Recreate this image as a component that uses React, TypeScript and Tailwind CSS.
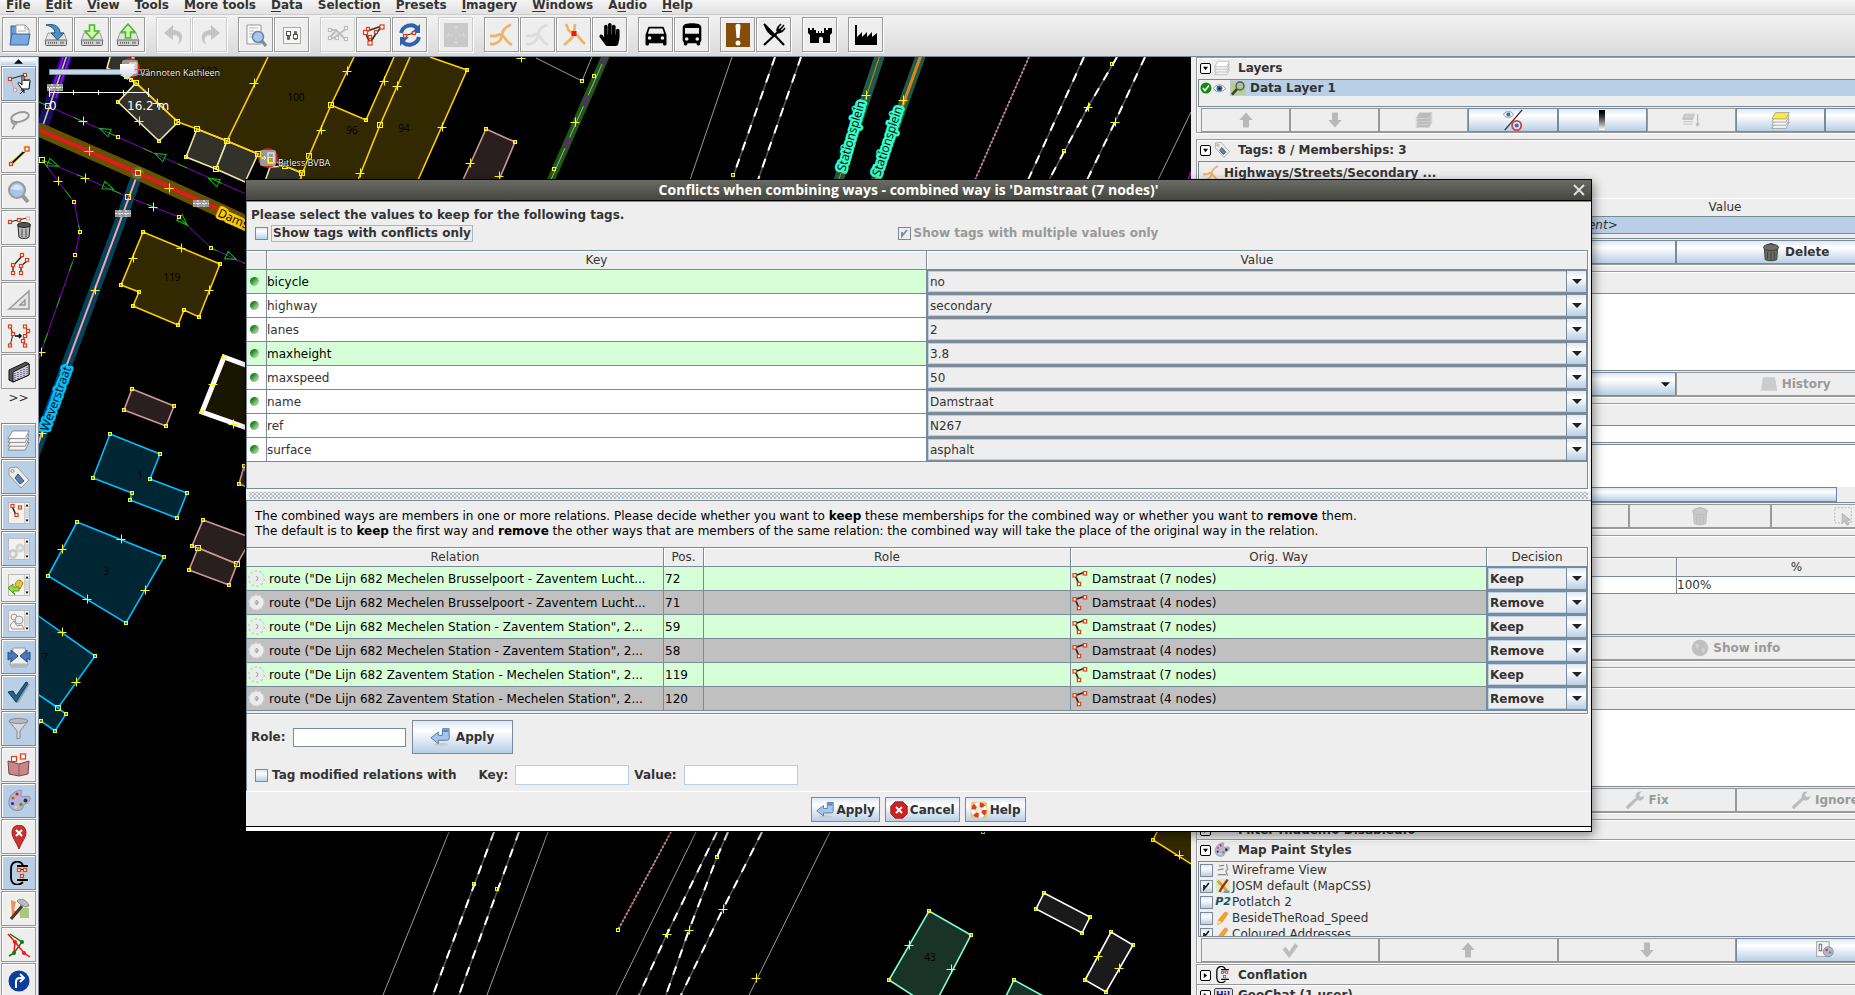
import type { ReactNode } from "react";
import { MdDirectionsBus, MdDirectionsCar } from "react-icons/md";
import { FaHandPaper } from "react-icons/fa";

/* ---------- shared class strings ---------- */

const SHINE = "bg-linear-to-b from-[#dde8f3] via-white via-30% to-[#b8cfe5]";

/* ---------- icon primitives ---------- */

function Svg({ children, size = 24, box = "0 0 24 24" }: { children: ReactNode; size?: number; box?: string }) {
  return (
    <svg width={size} height={size} viewBox={box} fill="none" className="shrink-0" aria-hidden="true">
      {children}
    </svg>
  );
}

function Dot({ x, y, c = "#e03c14", s = 3 }: { x: number; y: number; c?: string; s?: number }) {
  return <rect x={x - s / 2} y={y - s / 2} width={s} height={s} fill="#fff" stroke={c} strokeWidth="1.2" />;
}

function Drive() {
  return (
    <>
      <path d="M4 10h16l3 8H1z" fill="#e4e4e2" stroke="#888" strokeWidth=".8" />
      <rect x="1.500" y="17" width="21" height="5.500" rx="1" fill="#d0d0ce" stroke="#666" />
      <path d="M4 19.700h9" stroke="#666" strokeWidth="2" strokeDasharray="1 1" />
      <rect x="16" y="18.700" width="4" height="2" fill="#888" />
    </>
  );
}

function Road({ c, spot = false, size = 24 }: { c: string; spot?: boolean; size?: number }) {
  return (
    <Svg size={size}>
      {spot ? (
        <>
          <path d="M4 1l3 7 5 2 1-9M12 10c-1 5-5 8-10 12M12 10c5 2 6 7 11 11" stroke={c} strokeWidth="2.800" />
          <rect x="9.500" y="8" width="5" height="5" fill="#f11" />
        </>
      ) : (
        <path d="M21 1.500C14 5 12 8 12 13c-1 4-4 7-8 8H0M0 13h6c3-2 6-2 8 1 2 3 4 6 8 8" stroke={c} strokeWidth="2.800" />
      )}
    </Svg>
  );
}

function ArrowIcon({ dir }: { dir: "up" | "down" }) {
  return (
    <Svg size={18}>
      <path d={dir === "up" ? "M12 2l9 10h-5v10H8V12H3z" : "M12 22l9-10h-5V2H8v10H3z"} fill="#b9b9b9" />
    </Svg>
  );
}

function LayersIcon({ c = "#f4f4f4", size = 22, top = "#fff", line = "#888" }: { c?: string; size?: number; top?: string; line?: string }) {
  return (
    <Svg size={size}>
      {[14, 10, 6, 2].map((y, i) => (
        <path key={y} d={`M6 ${y}h17l-4 8H1z`} fill={i === 3 ? top : c} stroke={line} />
      ))}
    </Svg>
  );
}

function TagIcon({ size = 24 }: { size?: number }) {
  return (
    <Svg size={size}>
      <path d="M2 3l8-1 12 13-8 8L2 10z" fill="#eeeee6" stroke="#999" />
      <circle cx="5.500" cy="6" r="1.500" fill="#fff" stroke="#888" />
      <path d="M11 9l6 7-4 3-5-6z" fill="#5b7fb5" stroke="#32548c" />
    </Svg>
  );
}

function PaletteIcon({ size = 24 }: { size?: number }) {
  return (
    <Svg size={size}>
      <path d="M14 1C5 2 1 9 2 15c1 7 9 8 13 5 2-2 0-4 3-5 4-1 6-5 5-7-3-2-7 1-9-1-1-2 2-4 0-6z" fill="#b4b4d8" stroke="#8080a0" strokeWidth=".8" />
      <circle cx="10" cy="5" r="1.600" fill="#d02020" />
      <circle cx="6" cy="9" r="1.600" fill="#d06010" />
      <circle cx="5.500" cy="14.500" r="1.600" fill="#2030c0" />
      <circle cx="9" cy="18" r="1.600" fill="#f0e040" />
      <circle cx="14" cy="15.500" r="1.700" fill="#50a020" />
      <circle cx="18.500" cy="11.500" r="2" fill="#333" />
    </Svg>
  );
}

function ConflateIcon({ size = 24 }: { size?: number }) {
  return (
    <Svg size={size}>
      <path d="M16 4C13-1 4-1 4 8v8c0 9 8 9 12 5M10 5h11M10 19h11" stroke="#000" strokeWidth="1.800" />
      <path d="M12 8.500h7" stroke="#000" />
      <Dot x={12} y={9} /> <Dot x={18} y={9} /> <Dot x={15} y={15} />
    </Svg>
  );
}

function Wrench() {
  return (
    <Svg size={20}>
      <path d="M2 19L13 9c-1-4 2-8 7-7l-3 3 1 3 4 0 1-2c1 5-4 8-8 6L5 22c-2 2-5-1-3-3z" fill="#bdbdbd" />
    </Svg>
  );
}

function Bin({ c = "#6d6d68", line = "#33332f" }: { c?: string; line?: string }) {
  return (
    <Svg size={20}>
      <path d="M4 8h16l-1 13c-2 2-12 2-14 0z" fill={c} stroke={line} />
      <ellipse cx="12" cy="6.500" rx="9" ry="4" fill={c} stroke={line} />
      <path d="M9 4c0-3 6-3 6 0M8 12v9M12 12.500v9M16 12v9" stroke={line} />
    </Svg>
  );
}

function ReturnArrow({ size = 20 }: { size?: number }) {
  return (
    <Svg size={size}>
      <ellipse cx="13" cy="21" rx="9" ry="2" fill="#ccc" />
      <path d="M1 13l9-7v4h5V2h8v11c0 2-1 3-3 3H10v4z" fill="#a9c4e6" stroke="#3d6aa8" />
      <path d="M16 3h6v3h-6z" fill="#5b86c0" />
    </Svg>
  );
}

function WindowIcon({ children }: { children: ReactNode }) {
  return (
    <Svg>
      <rect x="1.500" y="1.500" width="21" height="21" fill="#f2f2f0" stroke="#bbb" />
      {children}
      <path d="M17.500 2v20" stroke="#ccc" />
      <rect x="18" y="7" width="4" height="10" fill="#d8d8d8" />
      <path d="M18.500 5.500L20 3l1.500 2.500zM18.500 18.500L20 21l1.500-2.500z" fill="#000" />
    </Svg>
  );
}

function WayIcon() {
  return (
    <Svg size={16}>
      <path d="M4 7l15-5M5 7l6 14" stroke="#222" strokeWidth="2.500" />
      <rect x="1.500" y="4" width="5" height="5" fill="#fff" stroke="#e03c14" strokeWidth="1.800" />
      <rect x="17" y="1" width="5" height="5" fill="#fff" stroke="#e03c14" strokeWidth="1.800" />
      <rect x="8" y="17" width="5" height="5" fill="#fff" stroke="#e03c14" strokeWidth="1.800" />
    </Svg>
  );
}

function Gear() {
  return (
    <Svg size={17}>
      <circle cx="12" cy="12" r="10" stroke="#cfcfcf" strokeWidth="4" strokeDasharray="3.500 2.780" />
      <circle cx="12" cy="12" r="6.500" stroke="#ececec" strokeWidth="7" />
      <path d="M11 9a3 3 0 110 6" stroke="#999" strokeWidth="1.300" />
    </Svg>
  );
}

function Eye({ size = 13 }: { size?: number }) {
  return (
    <Svg size={size}>
      <path d="M1 12C6 3 18 3 23 12 18 20 6 20 1 12z" fill="#fff" stroke="#888" strokeWidth="1.500" />
      <circle cx="12" cy="12" r="5.500" fill="#3f6db0" />
      <circle cx="12" cy="12" r="2.500" fill="#0a1e44" />
    </Svg>
  );
}

function Pencil() {
  return (
    <Svg size={14}>
      <path d="M4 16L15 2l5 3L10 20l-7 3z" fill="#f7a51c" stroke="#d8820c" />
      <path d="M15 2l2-1 4 3-1 1z" fill="#e88" />
      <path d="M4 16l6 4-7 3z" fill="#f4ddb0" />
    </Svg>
  );
}

/* ---------- top toolbar ---------- */

type Tool = { name: string; icon: ReactNode; off?: boolean };

const toolGroups: Tool[][] = [
  [
    {
      name: "Open",
      icon: (
        <Svg>
          <path d="M3 3h7l2 2v14H3z" fill="#6b9bd0" stroke="#2f5f9c" />
          <path d="M8 2h9l4 4v10H8z" fill="#fafafa" stroke="#999" />
          <path d="M17 2v4h4M10 8h8" stroke="#aaa" />
          <path d="M4 11h18l-2 11H2z" fill="#7ba7dc" stroke="#3465a4" />
        </Svg>
      ),
    },
    {
      name: "Save",
      icon: (
        <Svg>
          <Drive />
          <path d="M2 2c9-2 14 2 14 8h4l-6.500 7L7 10h4c0-4-4-7-9-8z" fill="#4a8fc0" stroke="#1f5a8a" />
        </Svg>
      ),
    },
    {
      name: "Download",
      icon: (
        <Svg>
          <Drive />
          <path d="M9.500 2h5v6H19l-7 8-7-8h4.500z" fill="#d4f8b4" stroke="#4ab520" strokeWidth="1.500" />
        </Svg>
      ),
    },
    {
      name: "Upload",
      icon: (
        <Svg>
          <Drive />
          <path d="M9.500 15h5V9H19l-7-8-7 8h4.500z" fill="#d4f8b4" stroke="#4ab520" strokeWidth="1.500" />
        </Svg>
      ),
    },
  ],
  [
    { name: "Undo", off: true, icon: <Svg><path d="M11 2L2 10l9 7v-5c6 0 8 3 5 10 7-6 5-15-5-15z" fill="#c4c4c4" /></Svg> },
    { name: "Redo", off: true, icon: <Svg><path d="M13 2l9 8-9 7v-5c-6 0-8 3-5 10-7-6-5-15 5-15z" fill="#c4c4c4" /></Svg> },
  ],
  [
    {
      name: "Search",
      icon: (
        <Svg>
          <path d="M3 2h14v19H3z" fill="#fafafa" stroke="#999" />
          <path d="M5 5h9M5 8h5M5 11h4M5 14h3" stroke="#bbb" />
          <path d="M18 18l4 5" stroke="#888" strokeWidth="3" />
          <circle cx="14" cy="14" r="5.500" fill="#a9c7ec" stroke="#6787b0" strokeWidth="1.500" />
        </Svg>
      ),
    },
    {
      name: "Preferences",
      icon: (
        <Svg>
          <rect x="3.500" y="4.500" width="17" height="16" fill="#f6f6f2" stroke="#aaa" />
          <rect x="7" y="8" width="3" height="9" rx="1" fill="#666" />
          <rect x="14" y="8" width="3" height="9" rx="1" fill="#666" />
          <rect x="6.500" y="8.500" width="4" height="4" fill="#fff" stroke="#555" />
          <rect x="13.500" y="11.500" width="4" height="4" fill="#fff" stroke="#555" />
        </Svg>
      ),
    },
  ],
  [
    {
      name: "Split way",
      off: true,
      icon: (
        <Svg>
          <path d="M3 7h7l9 9M3 15h5L21 5M3 15l8-8" stroke="#bdbdbd" strokeWidth="2" />
          <Dot x={4} y={7} c="#bdbdbd" /> <Dot x={4} y={15} c="#bdbdbd" /> <Dot x={11} y={15} c="#bdbdbd" /> <Dot x={20} y={5} c="#bdbdbd" /> <Dot x={20} y={16} c="#bdbdbd" />
        </Svg>
      ),
    },
    {
      name: "Combine way",
      icon: (
        <Svg>
          <path d="M3 9l8-3 9-3M3 9l5 11M20 3l-7 9-5 8" stroke="#333" strokeWidth="1.800" />
          <Dot x={3.500} y={9.500} s={4} /> <Dot x={6} y={6} /> <Dot x={20} y={4} s={4} /> <Dot x={14} y={9} /> <Dot x={8} y={14} /> <Dot x={8} y={20} s={4} />
        </Svg>
      ),
    },
    {
      name: "Update data",
      icon: (
        <Svg>
          <path d="M3 10C5 2 15 0 19 5" stroke="#2f62ad" strokeWidth="4" />
          <path d="M22 1v9h-9z" fill="#2f62ad" />
          <path d="M21 14c-2 8-12 10-16 5" stroke="#2f62ad" strokeWidth="4" />
          <path d="M2 23v-9h9z" fill="#2f62ad" />
          <path d="M6 13l10-3" stroke="#222" /> <Dot x={7} y={13} /> <Dot x={16} y={10} />
        </Svg>
      ),
    },
  ],
  [
    {
      name: "Fullscreen",
      off: true,
      icon: (
        <Svg>
          <rect width="24" height="24" fill="#c9c9c9" />
          <path d="M12 9V3m-2 2l2-2 2 2M12 15v6m-2-2l2 2 2-2M9 12H3m2-2l-2 2 2 2M15 12h6m-2-2l2 2-2 2" stroke="#dcdcdc" strokeDasharray="2 1" />
        </Svg>
      ),
    },
  ],
  [
    { name: "Roads", icon: <Road c="#f1b36a" /> },
    { name: "Paths", icon: <Road c="#dcdcdc" /> },
    { name: "Junction", icon: <Road c="#f1b36a" spot /> },
    { name: "Barrier", icon: <FaHandPaper size={23} color="#000" /> },
  ],
  [
    { name: "Car", icon: <MdDirectionsCar size={28} color="#000" /> },
    { name: "Bus", icon: <MdDirectionsBus size={28} color="#000" /> },
  ],
  [
    {
      name: "Attraction",
      icon: (
        <Svg>
          <rect width="24" height="24" fill="#854c0a" />
          <path d="M9.500 3c0-3 5-3 5 0l-1 12h-3z" fill="#fff" />
          <circle cx="12" cy="20" r="2.500" fill="#fff" />
        </Svg>
      ),
    },
    {
      name: "Restaurant",
      icon: (
        <Svg>
          <path d="M2 1l20 21" stroke="#000" strokeWidth="2.200" />
          <path d="M2 1l13 12-3 1C7 12 3 7 2 1z" fill="#000" />
          <path d="M2 22L17 8" stroke="#000" strokeWidth="2.200" />
          <path d="M15 8c0-3 1-4 4-7M17 8l5-6M16 9c3 1 5-1 7-4" stroke="#000" strokeWidth="1.500" />
          <path d="M15 10c-1-2 0-4 2-5l3 3c-1 2-3 3-5 2z" fill="#000" />
        </Svg>
      ),
    },
  ],
  [
    {
      name: "Castle",
      icon: (
        <Svg>
          <path d="M0 5h2v2h2V5h2v2h2V5h0v5h2V8h1v2h2V8h1v2h2V5h2v2h2V5h2v2h0V5h2v5l-2 2v8h-7v-4c0-3-4-3-4 0v4H2v-8l-2-2z" fill="#000" />
        </Svg>
      ),
    },
  ],
  [
    {
      name: "Factory",
      icon: (
        <Svg>
          <path d="M1 2h2v12l5-5v5l5-5v5l5-5v5l5-4v12H1z" fill="#000" />
        </Svg>
      ),
    },
  ],
];

/* ---------- left toolbar ---------- */

const modes: Tool[] = [
  {
    name: "Select",
    icon: (
      <Svg>
        <path d="M3 7l14-4" stroke="#222" /> <path d="M3 7l5 11" stroke="#d99" />
        <Dot x={3} y={7} /> <Dot x={18} y={3} /> <Dot x={8} y={18} c="#e0a090" />
        <path d="M13 11c-2-1-3 0-1 2l3 4h7l1-8c0-2-2-2-2 0 0-2-2-2-2 0 0-2-2-2-2 0V5c0-2-2-2-2 0v8z" fill="#fff" stroke="#000" />
        <path d="M13 22l4-4m-3 0h3v3" stroke="#000" />
      </Svg>
    ),
  },
  {
    name: "Lasso",
    icon: (
      <Svg>
        <ellipse cx="13" cy="9" rx="9" ry="4.500" stroke="#999" strokeWidth="2" transform="rotate(-15 13 9)" />
        <path d="M5 12c-2 3 3 5 5 3M8 14c-1 3 0 5-3 7" stroke="#999" strokeWidth="1.800" />
      </Svg>
    ),
  },
  {
    name: "Draw",
    icon: (
      <Svg>
        <path d="M4 20L20 5" stroke="#e8e060" strokeWidth="3.500" />
        <path d="M4 20L20 5" stroke="#111" strokeWidth="1.800" />
        <rect x="16" y="1" width="7" height="7" fill="#f4ee80" /> <Dot x={4} y={20} /> <Dot x={20} y={5} s={4} />
      </Svg>
    ),
  },
  {
    name: "Zoom",
    icon: (
      <Svg>
        <path d="M15 15l6 7" stroke="#999" strokeWidth="4" />
        <circle cx="10" cy="10" r="8" fill="#a9c4e6" stroke="#999" strokeWidth="2" />
        <path d="M4 9c2-6 10-6 12 0-4 2-8 1-12 0z" fill="#d5e3f5" />
      </Svg>
    ),
  },
  {
    name: "Delete",
    icon: (
      <Svg>
        <path d="M2 6l18-4" stroke="#222" /> <Dot x={3} y={6} /> <Dot x={12} y={4} /> <Dot x={21} y={2.5} c="#e8b0a0" />
        <path d="M11 10h12l-1 11c-2 2-8 2-10 0z" fill="#bbb" stroke="#222" />
        <ellipse cx="17" cy="9" rx="6.500" ry="2.500" fill="#555" stroke="#222" />
        <path d="M15 13v8M19 13v8" stroke="#444" />
      </Svg>
    ),
  },
  {
    name: "Parallel",
    icon: (
      <Svg>
        <path d="M6 21v-7l9-10M14 21v-7l6-5" stroke="#222" strokeWidth="1.300" />
        <Dot x={6} y={21} /> <Dot x={6} y={13} /> <Dot x={15} y={3} /> <Dot x={14} y={21} /> <Dot x={14} y={14} /> <Dot x={20} y={8} />
      </Svg>
    ),
  },
  { name: "Angle", icon: <Svg><path d="M2 21L22 3v18zM13 17l5-5v5z" fill="#e6e6e6" stroke="#999" strokeWidth="1.500" /></Svg> },
  {
    name: "Improve way",
    icon: (
      <Svg>
        <path d="M3 2l3 8-3 12M18 2l3 5-5 9 2 6" stroke="#222" />
        <path d="M8 12h6m-2-2l2 2-2 2" stroke="#000" strokeWidth="1.500" />
        <Dot x={3} y={2.5} /> <Dot x={6} y={10} /> <Dot x={3} y={21.5} /> <Dot x={18} y={2.5} /> <Dot x={21} y={7} /> <Dot x={18} y={12} /> <Dot x={16} y={17} /> <Dot x={18} y={21.5} />
      </Svg>
    ),
  },
  {
    name: "Extrude",
    icon: (
      <Svg>
        <path d="M2 10L19 2l3 2v11L6 22l-4-2z" fill="#555" stroke="#111" />
        <path d="M6 12l16-8v11L6 22z" fill="#ccd" stroke="#111" />
        <path d="M8 13v7M11 12v7M14 10v7M17 9v7M20 7v7" stroke="#223" strokeDasharray="1 1" />
      </Svg>
    ),
  },
];

const panels: (Tool & { on?: boolean })[] = [
  { name: "Layers", on: true, icon: <LayersIcon size={23} /> },
  { name: "Tags", on: true, icon: <TagIcon /> },
  { name: "Selection", on: true, icon: <WindowIcon><path d="M5 5l4 9" stroke="#222" strokeWidth="1.500" /><Dot x={5.5} y={5} /><Dot x={13} y={6.5} /><Dot x={9.5} y={14} /></WindowIcon> },
  { name: "Relations", on: true, icon: <WindowIcon><circle cx="6" cy="17" r="3.500" stroke="#ccc" strokeWidth="3" /><circle cx="13" cy="11" r="3" stroke="#d4d4d4" strokeWidth="3" /></WindowIcon> },
  { name: "Commands", icon: <WindowIcon><path d="M8 12c1-6 6-6 8-2l-3 6c-2-1-4-2-5-4z" fill="#e8c040" stroke="#a88820" /><path d="M1 15l5-4v3h6v4H6l2 4z" fill="#9dd84a" stroke="#5a9a20" /></WindowIcon> },
  { name: "Authors", on: true, icon: <WindowIcon><circle cx="7" cy="8" r="3" stroke="#999" /><circle cx="12" cy="11" r="4" fill="#eee" stroke="#999" /><path d="M3 16l4-4 3 5 5-1 2 4H5z" stroke="#999" /></WindowIcon> },
  {
    name: "Merge",
    on: true,
    icon: (
      <Svg>
        <path d="M6 3h12l3 17H3z" fill="#f0f0ee" stroke="#999" />
        <path d="M1 7l3 2V5l7 6-7 6v-4l-3 2zM23 7l-3 2V5l-7 6 7 6v-4l3 2z" fill="#4a7ab8" stroke="#234f8c" />
        <path d="M5 19h14M4 22h16" stroke="#aaa" />
      </Svg>
    ),
  },
  { name: "Validator", on: true, icon: <Svg><path d="M3 12l4-1 3 5L20 3h3L11 22H9z" fill="#666" opacity=".5" /><path d="M1 11l5-1 3 5L19 1l2 1L9 21z" fill="#1f6488" stroke="#123f58" /></Svg> },
  { name: "Filter", on: true, icon: <Svg><path d="M2 4l8 10v8l3-1v-7l8-10z" fill="#d8d8e4" stroke="#888" /><ellipse cx="11.500" cy="4" rx="9.500" ry="2.500" fill="#b8b8c8" stroke="#888" /></Svg> },
  { name: "Changeset", icon: <Svg><path d="M1 8l11 3 10-3-1 13-9 2-10-2z" fill="#c98888" stroke="#7a4444" /><path d="M12 11v12" stroke="#9a5555" /><Dot x={7} y={6} s={5} /><Dot x={16} y={3.5} s={5} /></Svg> },
  { name: "Map paint", on: true, icon: <PaletteIcon /> },
  { name: "Notes", icon: <Svg><path d="M12 24C9 16 5 13 5 7a7 7 0 0114 0c0 6-4 9-7 17z" fill="#c83232" stroke="#a02020" /><path d="M9 5l6 6m0-6l-6 6" stroke="#fff" strokeWidth="2" /></Svg> },
  { name: "Conflation", on: true, icon: <ConflateIcon /> },
  { name: "Imagery", icon: <Svg><rect x="1" y="1" width="22" height="22" fill="#f4f0e4" /><path d="M4 3l5 2-2 8 5 3-7 5z" fill="#e89070" /><path d="M12 11h10v10H13z" fill="#a8c880" /><path d="M4 22L15 9" stroke="#4a3a28" strokeWidth="3" /><path d="M10 4c3-3 10-2 12 5l-4 1-5-3z" fill="#bbb" stroke="#888" /></Svg> },
  { name: "Conflicts", icon: <Svg><path d="M3 1l12 8L7 20l-5 3" stroke="#0a7d18" strokeWidth="1.500" /><path d="M1 1l7 8-1 11M8 9l9 11 6 4" stroke="#f11" strokeWidth="1.500" /><circle cx="15" cy="9" r="2" fill="#0a7d18" /><circle cx="7" cy="20" r="2" fill="#0a7d18" /><circle cx="8" cy="9" r="2" fill="#f11" /><circle cx="17" cy="20" r="2" fill="#f11" /></Svg> },
  { name: "Turn restrictions", icon: <Svg><circle cx="12" cy="12" r="10.500" fill="#0b3d9c" /><path d="M9 19v-6c0-3 2-4 4-4h4m-4-4l4 4-4 4" stroke="#fff" strokeWidth="2" /></Svg> },
];

/* ---------- map ---------- */

type Pt = [number, number];

const smallNodes: Pt[] = [
  [118, 137], [179, 217], [211, 248], [74, 202], [80, 232], [75, 255], [118, 102], [159, 141], [186, 157], [131, 80], [126, 77],
  [366, 120], [467, 70], [486, 129], [515, 142], [143, 232], [220, 264], [121, 285], [139, 292], [133, 306], [178, 325], [184, 310],
  [199, 317], [132, 389], [174, 406], [166, 426], [124, 410], [224, 357], [202, 412], [110, 434], [160, 454], [150, 479], [187, 493],
  [177, 518], [130, 500], [132, 493], [93, 478], [77, 522], [164, 557], [126, 623], [48, 576], [95, 656], [66, 714], [55, 731],
  [41, 721], [203, 520], [192, 546], [229, 585], [189, 570], [244, 466], [239, 484], [66, 367], [582, 81], [594, 76], [554, 169],
  [733, 175], [1112, 64], [1064, 151], [474, 884], [497, 889], [618, 930], [717, 857], [929, 911], [971, 935], [889, 980],
  [1014, 980], [1044, 893], [1090, 917], [1082, 933], [1036, 909], [1111, 932], [1133, 945], [1106, 992], [1085, 980], [1153, 840],
  [983, 832],
];

const bigNodes: Pt[] = [
  [48, 106], [42, 160], [128, 197], [138, 173], [136, 83], [177, 122], [197, 129], [227, 141], [258, 154], [216, 169], [285, 166],
  [302, 173], [309, 156], [331, 105], [380, 125], [58, 708], [198, 548], [237, 564], [271, 160],
];

const crosses: Pt[] = [
  [83, 121], [89, 151], [169, 188], [85, 178], [153, 207], [58, 181], [41, 352], [157, 103], [139, 121], [254, 83], [321, 130],
  [347, 71], [384, 81], [397, 86], [442, 127], [360, 173], [470, 163], [499, 176], [181, 248], [133, 258], [209, 290], [95, 290],
  [42, 433], [213, 384], [233, 424], [121, 539], [62, 549], [145, 590], [87, 599], [62, 632], [76, 682], [521, 58], [575, 122],
  [866, 95], [903, 100], [1088, 107], [1115, 122], [667, 934], [689, 930], [723, 909], [756, 978], [909, 945], [951, 969],
  [1179, 855], [1098, 956], [1119, 968],
];

const buildings = [
  { fill: "#33322a", line: "#f2e6ac", w: 1.6, pts: ["118,102 136,83 178,122 159,141", "197,129 227,141 216,169 186,157", "227,141 258,154 245,182 216,169", "112,50 107,68 128,78 134,50", "270,167 285,166 302,173 298,190 262,190"] },
  { fill: "#2a1f1f", line: "#cf9898", w: 1.6, pts: ["486,129 515,142 499,180 463,180", "132,389 174,406 166,426 124,410", "203,520 252,538 237,564 198,548 192,546", "198,548 237,564 229,585 189,570", "244,466 239,484 250,488"] },
  { fill: "#332900", line: "#ffcc00", w: 1.6, pts: ["143,232 220,264 199,317 184,310 178,325 133,306 139,292 121,285", "1160,826 1153,840 1196,867 1200,826"] },
  { fill: "#1a1500", line: "#ffffff", w: 5, pts: ["224,357 270,374 270,436 202,412"] },
  { fill: "#002633", line: "#00bfff", w: 1.6, pts: ["110,434 160,454 150,479 187,493 177,518 130,500 132,493 93,478", "77,522 164,557 126,623 48,576", "30,610 95,656 58,708 30,689", "30,689 58,708 66,714 55,731 41,721 30,736"] },
  { fill: "#1a3329", line: "#7fffd0", w: 1.6, pts: ["929,911 971,935 937,1000 920,1000 889,980", "1014,980 1045,997 1004,1000"] },
  { fill: "#1a1a1a", line: "#ffffff", w: 1.6, pts: ["1044,893 1090,917 1082,933 1036,909", "1111,932 1133,945 1106,992 1085,980"] },
];

const rails = [
  "775,57 733,177", "801,57 758,180", "1084,57 1028,180", "1117,57 1088,107 1049,180", "1145,57 1115,122 1087,180",
  "494,832 433,995", "519,832 459,995", "717,832 667,934 639,995", "728,832 717,857 689,930 666,995", "762,832 723,909 681,995",
];

const thinLines = [
  "536,58 582,81 592,57", "732,57 690,180", "1191,112 1158,180", "449,832 383,995", "548,832 487,995", "696,832 616,995", "830,832 749,995",
];

const footways = [
  "39,102 48,106 118,137 160,156 246,194",
  "42,160 85,178 128,197 179,217 211,248 246,264",
  "42,160 58,181 74,202 80,232 75,255 41,352 38,362",
];

const arrows: [number, number, number][] = [
  [105, 131, 205], [160, 156, 205], [214, 181, 205], [53, 164, 22], [108, 187, 22], [183, 221, 45], [231, 257, 25],
];

const houseNumbers: [number, number, string][] = [
  [209, 75, "102"], [296, 101, "100"], [352, 134, "96"], [404, 132, "94"], [172, 281, "119"], [140, 479, "1"], [106, 575, "3"], [45, 661, "7"], [930, 961, "43"],
];

const houseLines = ["268,57 227,141", "354,57 331,105 366,120 394,57", "331,105 309,156 300,180", "410,57 380,125 358,180", "430,57 467,70 418,180", "134,57 130,79 136,83 178,122 197,129 227,141 258,154 302,173"];

function MapCanvas() {
  return (
    <svg viewBox="39 57 1152 938" preserveAspectRatio="xMinYMin slice" className="block h-full w-full" role="img" aria-label="Map" fill="none">
      <polyline points="67,55 41,131" stroke="#1c0e62" strokeWidth="12" />
      <polyline points="67,55 53,97" stroke="#a000ff" strokeWidth="8" />
      <polyline points="67,55 53,97" stroke="#1c0e62" strokeWidth="4" />
      <polyline points="67,55 41,131" stroke="#b5dcb0" strokeWidth="1.500" />

      <polyline points="138,173 66,367 34,455" stroke="#00455f" strokeWidth="11" />
      <polyline points="138,173 66,367 34,455" stroke="#ff9f9f" strokeWidth="2" />
      <polyline points="40,130 138,173 250,224" stroke="#665200" strokeWidth="14" strokeLinecap="round" />
      <circle cx="138" cy="173" r="6" fill="#5c7a50" />
      <polyline points="40,130 138,173 218,209" stroke="#e31a1c" strokeWidth="4" />

      {footways.map((p) => (
        <g key={p}>
          <polyline points={p} stroke="#8a00c8" />
          <polyline points={p} stroke="#00c800" strokeDasharray="10 28" />
        </g>
      ))}
      {arrows.map(([x, y, a]) => (
        <path key={`${x}-${y}`} d="M-5-4L6 0-5 4z" stroke="#00c800" transform={`translate(${x} ${y}) rotate(${a})`} />
      ))}

      <polygon points="134,57 354,57 331,105 366,120 394,57 430,57 467,70 418,182 298,182 302,173 258,154 227,141 197,129 178,122 136,83 130,79" fill="#332900" />
      {buildings.map((b) => b.pts.map((p) => <polygon key={p} points={p} fill={b.fill} stroke={b.line} strokeWidth={b.w} />))}
      {houseLines.map((p) => (
        <polyline key={p} points={p} stroke="#ffcc00" strokeWidth="1.600" />
      ))}

      <polyline points="606,55 550,182" stroke="#1e5a10" strokeWidth="8" />
      <polyline points="606,55 550,182" stroke="#b0a8b8" />
      <polyline points="606,55 550,182" stroke="#8a00c8" strokeWidth="2" strokeDasharray="12 34" strokeDashoffset="-44" />
      <polyline points="880,55 838,182" stroke="#1c5c4a" strokeWidth="10" />
      <polyline points="880,55 838,182" stroke="#f08000" />
      <polyline points="921,55 875,182" stroke="#1c5c4a" strokeWidth="10" />
      <polyline points="921,55 875,182" stroke="#f08000" strokeWidth="3" />
      <polyline points="921,55 875,182" stroke="#8080ff" strokeDasharray="2 5" />
      {thinLines.map((p) => (
        <polyline key={p} points={p} stroke="#9a9a9a" />
      ))}
      {rails.map((p) => (
        <g key={p}>
          <polyline points={p} stroke="#555" strokeWidth="1.600" />
          <polyline points={p} stroke="#fff" strokeWidth="2" strokeDasharray="9 9" />
        </g>
      ))}
      {["1029,57 975,180", "671,832 618,930"].map((p) => (
        <g key={p}>
          <polyline points={p} stroke="#5577aa" />
          <polyline points={p} stroke="#e08080" strokeWidth="2" strokeDasharray="2 2" />
        </g>
      ))}
      <path d="M1191 172l-3 8" stroke="#8a00c8" strokeWidth="2" />

      {[[47, 84], [115, 210], [193, 200]].map(([x, y]) => (
        <g key={x}>
          <rect x={x} y={y} width="16" height="7" fill="#999" />
          <path d={`M${x} ${y + 3.5}h16M${x + 5} ${y}v7M${x + 11} ${y}v7`} stroke="#eee" strokeDasharray="2 1" />
        </g>
      ))}

      {[[130, 68], [268, 158]].map(([x, y]) => (
        <g key={x}>
          <circle cx={x} cy={y} r="10" fill="#e01b1b" />
          <rect x={x - 8} y={y - 8} width="16" height="16" rx="2" fill="#999" />
          <rect x={x} y={y - 5} width="6" height="10" stroke="#fff" />
          <path d={`M${x - 7} ${y}h5m-2-2l2 2-2 2`} stroke="#fff" />
        </g>
      ))}

      <g stroke="#ff0">
        {smallNodes.map(([x, y]) => (
          <rect key={`${x}-${y}`} x={x - 1.5} y={y - 1.5} width="3" height="3" />
        ))}
        {bigNodes.map(([x, y]) => (
          <rect key={`${x}-${y}`} x={x - 2.5} y={y - 2.5} width="5" height="5" />
        ))}
        {crosses.map(([x, y]) => (
          <path key={`${x}-${y}`} d={`M${x - 4.5} ${y + 0.5}h9M${x + 0.5} ${y - 4.5}v9`} />
        ))}
      </g>

      <g className="font-['Open_Sans',sans-serif] text-[10px]" fill="#000" textAnchor="middle">
        {houseNumbers.map(([x, y, t]) => (
          <text key={t} x={x} y={y}>{t}</text>
        ))}
      </g>
      <g className="font-['Open_Sans',sans-serif] text-[9px]" fill="#fff" stroke="#000" strokeWidth="1" paintOrder="stroke">
        <text x="140" y="76">Vannoten Kathleen</text>
        <text x="278" y="166">Bitless BVBA</text>
      </g>
      <g className="font-['Open_Sans',sans-serif] text-[12px]" fill="#000" strokeWidth="5" strokeLinejoin="round" paintOrder="stroke">
        <text transform="translate(217 216) rotate(24)" stroke="#ffcc00">Damstraat</text>
        <text transform="translate(48 432) rotate(-70)" stroke="#00bfff">Weverstraat</text>
        <text transform="translate(845 172) rotate(-74)" stroke="#33ffcc">Stationsplein</text>
        <text transform="translate(880 177) rotate(-72)" stroke="#33ffcc">Stationsplein</text>
      </g>

      <path d="M49 92.500h100M49.500 88v9M73.500 90v5M98.500 90v5M123.500 90v5M148.500 88v9" stroke="#fff" />
      <g className="font-['DejaVu_Sans',sans-serif] text-[12px]" fill="#fff">
        <text x="49" y="110">0</text>
        <text x="127" y="110">16.2 m</text>
      </g>
    </svg>
  );
}

/* ---------- small controls ---------- */

function Check({ label, checked = false, disabled = false, small = false, children }: { label: string; checked?: boolean; disabled?: boolean; small?: boolean; children?: ReactNode }) {
  return (
    <label className={`flex items-center ${disabled ? "text-[#999]" : ""}`}>
      <span className="relative flex">
        <input type="checkbox" defaultChecked={checked} disabled={disabled} aria-label={label} className={`h-[13px] w-[13px] appearance-none border border-[#7a8a99] ${disabled ? "" : SHINE}`} />
        {checked && (
          <svg viewBox="0 0 13 13" className="pointer-events-none absolute inset-0" fill="none">
            <path d="M4 5v4l5-6" stroke={disabled ? "#7a8a99" : "#222"} strokeWidth="1.800" />
          </svg>
        )}
      </span>
      {children ?? <span className={small ? "pl-1" : "pl-[3px]"}>{label}</span>}
    </label>
  );
}

function Combo({ value, options, label, bold = false }: { value: string; options: string[]; label: string; bold?: boolean }) {
  return (
    <span className="relative flex h-[23px] border border-[#7a8a99]">
      <select defaultValue={value} aria-label={label} className={`h-full w-full appearance-none border border-[#b8cfe5] bg-[#eee] pl-px text-[#333] ${bold ? "font-bold" : ""}`}>
        {options.map((o) => (
          <option key={o}>{o}</option>
        ))}
      </select>
      <span className={`pointer-events-none absolute inset-y-0 right-0 flex w-5 items-center justify-center border-l border-[#7a8a99] ${SHINE}`}>
        <svg width="10" height="5" viewBox="0 0 10 5"><path d="M0 0h10L5 5z" fill="#222" /></svg>
      </span>
    </span>
  );
}

function Th({ children, cls = "" }: { children?: ReactNode; cls?: string }) {
  return <th className={`h-[19px] border-r border-b border-[#7a8a99] p-0 font-normal shadow-[inset_1px_1px_0_white] last:border-r-0 ${cls}`}>{children}</th>;
}

/* ---------- dialog ---------- */

const tagRows: [string, string, boolean][] = [
  ["bicycle", "no", true], ["highway", "secondary", false], ["lanes", "2", false], ["maxheight", "3.8", true],
  ["maxspeed", "50", false], ["name", "Damstraat", false], ["ref", "N267", false], ["surface", "asphalt", false],
];

const members: [string, string, boolean][] = [
  ['route ("De Lijn 682 Mechelen Brusselpoort - Zaventem Lucht...', "72", true],
  ['route ("De Lijn 682 Mechelen Brusselpoort - Zaventem Lucht...', "71", false],
  ['route ("De Lijn 682 Mechelen Station - Zaventem Station", 2...', "59", true],
  ['route ("De Lijn 682 Mechelen Station - Zaventem Station", 2...', "58", false],
  ['route ("De Lijn 682 Zaventem Station - Mechelen Station", 2...', "119", true],
  ['route ("De Lijn 682 Zaventem Station - Mechelen Station", 2...', "120", false],
];

function ConflictDialog() {
  return (
    <div role="dialog" aria-label="Conflicts when combining ways" className="absolute top-[179px] left-[245px] w-[1347px] border border-black bg-[#eee] shadow-[2px_3px_10px_rgba(0,0,0,0.45)]">
      <header className="flex h-[21px] items-center border-b border-black bg-linear-to-b from-[#6a6b64] to-[#45463f] pr-1 text-white">
        <h1 className="flex-1 text-center font-['Open_Sans',sans-serif] text-[14px] leading-5 font-bold">Conflicts when combining ways - combined way is 'Damstraat (7 nodes)'</h1>
        <button type="button" aria-label="Close" className="flex h-4 w-4 items-center justify-center">
          <svg width="12" height="12" viewBox="0 0 12 12"><path d="M1 1l10 10M11 1L1 11" stroke="#ddd" strokeWidth="2" /></svg>
        </button>
      </header>

      <section className="border-t border-l border-[#7a8a99] pr-[3px]">
        <p className="pt-[5px] pl-1 leading-4 font-bold">Please select the values to keep for the following tags.</p>
        <div className="mt-px grid h-[18px] grid-cols-2 items-center pl-2 font-bold">
          <Check label="Show tags with conflicts only">
            <span className="ml-[3px] border border-[#a3b8cc] px-px leading-[15px]">Show tags with conflicts only</span>
          </Check>
          <div className="-ml-6 flex"><Check label="Show tags with multiple values only" checked disabled /></div>
        </div>
        <div className="mt-2 min-h-[239px] border border-l-0 border-[#7a8a99] shadow-[1px_1px_0_white]">
          <table className="w-full table-fixed border-separate border-spacing-0">
            <thead>
              <tr>
                <Th cls="w-5" />
                <Th>Key</Th>
                <Th>Value</Th>
              </tr>
            </thead>
            <tbody>
              {tagRows.map(([key, value, hit]) => (
                <tr key={key} className={hit ? "bg-[#d7ffd7] text-black" : "bg-white"}>
                  <td className="h-6 border-r border-b border-[#7a8a99] p-0">
                    <span className="ml-[3px] block h-[9px] w-[9px] rounded-full bg-linear-to-br from-[#1e8a1e] from-30% to-[#e4f4e4]" />
                  </td>
                  <td className="border-r border-b border-[#7a8a99] p-0">{key}</td>
                  <td className="border-b border-[#7a8a99] bg-[#eee] p-0">
                    <Combo value={value} options={[value]} label={key} />
                  </td>
                </tr>
              ))}
            </tbody>
          </table>
        </div>
      </section>

      <div className="mt-px border-t border-white px-[3px] py-px">
        <div className="h-[7px] bg-[radial-gradient(#7a8a99_0.5px,transparent_0.9px),radial-gradient(#7a8a99_0.5px,transparent_0.9px)] bg-[size:4px_4px] bg-[position:0_0,2px_2px]" />
      </div>

      <section className="border-t border-l border-[#7a8a99] pr-[3px]">
        <p className="px-2 py-2 leading-[15px] text-black">
          The combined ways are members in one or more relations. Please decide whether you want to <b>keep</b> these memberships for the combined way or whether you want to <b>remove</b> them.
          <br />
          The default is to <b>keep</b> the first way and <b>remove</b> the other ways that are members of the same relation: the combined way will take the place of the original way in the relation.
        </p>
        <div className="border border-l-0 border-[#7a8a99] pb-0.5 shadow-[1px_1px_0_white]">
          <table className="w-full table-fixed border-separate border-spacing-0">
            <thead>
              <tr>
                <Th cls="w-[417px]">Relation</Th>
                <Th cls="w-10">Pos.</Th>
                <Th cls="w-[367px]">Role</Th>
                <Th cls="w-[416px]">Orig. Way</Th>
                <Th>Decision</Th>
              </tr>
            </thead>
            <tbody className="text-black">
              {members.map(([relation, pos, keep]) => (
                <tr key={pos} className={keep ? "bg-[#d7ffd7]" : "bg-[#c0c0c0]"}>
                  <td className="h-6 border-r border-b border-[#7a8a99] p-0">
                    <span className="flex items-center gap-1 pl-px whitespace-nowrap"><Gear />{relation}</span>
                  </td>
                  <td className="border-r border-b border-[#7a8a99] p-0 pl-px">{pos}</td>
                  <td className="border-r border-b border-[#7a8a99] p-0" />
                  <td className="border-r border-b border-[#7a8a99] p-0">
                    <span className="flex items-center gap-1 pl-px"><WayIcon />{keep ? "Damstraat (7 nodes)" : "Damstraat (4 nodes)"}</span>
                  </td>
                  <td className="border-b border-[#7a8a99] bg-[#eee] p-0">
                    <Combo value={keep ? "Keep" : "Remove"} options={["Keep", "Remove"]} label={`Decision ${pos}`} bold />
                  </td>
                </tr>
              ))}
            </tbody>
          </table>
        </div>
        <div className="flex items-center pt-1.5 pl-1 font-bold">
          <label htmlFor="role">Role:</label>
          <input id="role" className="mr-1.5 ml-[7px] h-[19px] w-[113px] border border-[#7a8a99] bg-white px-1" />
          <button type="button" className={`flex h-[34px] w-[101px] items-center justify-center gap-1.5 border border-[#7a8a99] ${SHINE}`}>
            <ReturnArrow />Apply
          </button>
        </div>
        <div className="mt-[11px] flex items-center pb-1.5 pl-2 font-bold">
          <Check label="Tag modified relations with" small />
          <label htmlFor="tag-key" className="ml-[22px]">Key:</label>
          <input id="tag-key" className="ml-[7px] h-5 w-[114px] border border-[#b8cfe5] bg-white px-1" />
          <label htmlFor="tag-value" className="ml-[5px]">Value:</label>
          <input id="tag-value" className="ml-[7px] h-5 w-[114px] border border-[#b8cfe5] bg-white px-1" />
        </div>
      </section>

      <footer className="flex justify-center gap-[5px] border-t border-white pt-[5px] pb-1 font-bold">
        <button type="button" className={`flex h-[25px] items-center gap-0.5 border border-[#7a8a99] px-1 ${SHINE}`}><ReturnArrow size={18} />Apply</button>
        <button type="button" className={`flex h-[25px] items-center gap-0.5 border border-[#7a8a99] px-1 ${SHINE}`}>
          <Svg size={18}><path d="M7 1h10l6 6v10l-6 6H7l-6-6V7z" fill="#cc2222" stroke="#8c1010" /><path d="M8 8l8 8m0-8l-8 8" stroke="#fff" strokeWidth="2.500" /></Svg>
          Cancel
        </button>
        <button type="button" className={`flex h-[25px] items-center gap-0.5 border border-[#7a8a99] px-1 ${SHINE}`}>
          <Svg size={18}><rect x="1" y="1" width="22" height="22" rx="4" fill="#e8c860" /><circle cx="12" cy="12" r="7.500" stroke="#fff" strokeWidth="6" /><circle cx="12" cy="12" r="7.500" stroke="#e03c28" strokeWidth="6" strokeDasharray="5.900 5.900" /><circle cx="12" cy="12" r="4" fill="#f4ecd0" /></Svg>
          Help
        </button>
      </footer>
      <div className="h-[5px] border-t border-black bg-white" />
    </div>
  );
}

/* ---------- right side panels ---------- */

function PanelTitle({ title, icon, open = true }: { title?: string; icon?: ReactNode; open?: boolean }) {
  return (
    <div className="flex h-[21px] items-center pl-[3px] font-bold">
      <button type="button" aria-label={title ? `Toggle ${title}` : "Toggle panel"} className="flex h-[11px] w-[11px] items-center justify-center rounded-[2px] border border-black bg-white">
        <svg width="5" height="5" viewBox="0 0 6 6"><path d={open ? "M0 1h6L3 5z" : "M1 0v6l4-3z"} fill="#000" /></svg>
      </button>
      <span className="ml-[3px] flex w-6 items-center pb-0.5">{icon}</span>
      {title && <h2 className="pb-0.5">{title}</h2>}
    </div>
  );
}

function Panel({ title, icon, buttons, children, tight = false }: { title?: string; icon?: ReactNode; buttons: { icon?: ReactNode; label?: string; on?: boolean }[]; children: ReactNode; tight?: boolean }) {
  return (
    <section className={`border border-[#999] shadow-[inset_1px_1px_0_white,0_1px_0_white] ${tight ? "mb-px" : "mb-1.5"}`}>
      <PanelTitle title={title} icon={icon} />
      <div className="px-px">{children}</div>
      <div className="mt-px flex px-1">
        {buttons.map((b, i) => (
          <button
            key={i}
            type="button"
            disabled={!b.on}
            aria-label={b.label ?? `Action ${i + 1}`}
            className={`flex h-6 flex-1 items-center justify-center gap-1 border font-bold ${b.on ? `border-[#7a8a99] ${SHINE}` : "border-[#999] text-[#999]"}`}
          >
            {b.icon}
            {b.label}
          </button>
        ))}
      </div>
    </section>
  );
}

function Collapsed({ title, icon }: { title?: string; icon?: ReactNode }) {
  return (
    <section className="h-5 overflow-hidden border border-b-0 border-[#999] shadow-[inset_1px_1px_0_white]">
      <PanelTitle title={title} icon={icon} open={false} />
    </section>
  );
}

const styles: [string, boolean, ReactNode][] = [
  ["Wireframe View", false, <Svg size={14}><path d="M3 20h14M3 12l10-2M5 5l9-1M18 2l2 9-3 3 3 8" stroke="#888" strokeWidth="2" /></Svg>],
  ["JOSM default (MapCSS)", true, <Svg size={14}><rect width="24" height="24" fill="#d8ecc8" /><path d="M3 3l8 9 9 10" stroke="#e8a020" strokeWidth="5" /><path d="M20 1l-8 11-6 10" stroke="#a03020" strokeWidth="4" /><path d="M14 20h9v4H12z" fill="#60a0e0" /></Svg>],
  ["Potlatch 2", false, <b className="text-[11px] text-[#0d5660] italic">P2</b>],
  ["BesideTheRoad_Speed", false, <Pencil />],
  ["Coloured Addresses", true, <Pencil />],
];

function SidePanels() {
  return (
    <aside className="w-[664px] shrink-0 overflow-hidden bg-[#eee] pl-[5px]">
      <div className="w-[723px]">
        <Panel
          title="Layers"
          icon={<LayersIcon size={16} line="#aaa" />}
          buttons={[
            { icon: <ArrowIcon dir="up" /> },
            { icon: <ArrowIcon dir="down" /> },
            { icon: <LayersIcon size={18} c="#bbb" top="#bbb" line="#d4d4d4" /> },
            { on: true, icon: <Svg size={22}><path d="M3 23L22 1" stroke="#333" strokeWidth="1.500" /><ellipse cx="7" cy="6" rx="5" ry="3" fill="#fff" stroke="#888" /><circle cx="7" cy="6" r="2.300" fill="#3f6db0" /><circle cx="16" cy="18" r="5" fill="#dce6f4" stroke="#d84040" strokeWidth="2" /><circle cx="16" cy="18" r="2.300" fill="#3f6db0" /></Svg> },
            { on: true, icon: <span className="h-5 w-1.5 bg-linear-to-b from-black to-white" /> },
            { icon: <Svg size={20}><path d="M4 5h12l-2 6H2zM3 11h11M3 14h11M3 17h11" fill="#ccc" stroke="#bbb" /><path d="M20 5v14m-2-3l2 3 2-3" stroke="#bbb" strokeWidth="1.500" /></Svg> },
            { on: true, icon: <LayersIcon size={19} top="#ffe93c" line="#999" /> },
            { on: true },
          ]}
        >
          <div className="h-7 border border-[#7a8a99]">
            <div className="flex h-4 items-center pl-px">
              <Svg size={12}><circle cx="12" cy="12" r="11" fill="#148a14" /><path d="M6 12l4 5 8-10" stroke="#fff" strokeWidth="3" /></Svg>
              <span className="mr-1 ml-px"><Eye /></span>
              <span className="flex flex-1 items-center gap-1 bg-[#b8cfe5] font-bold">
                <Svg size={16}><rect x="1" y="2" width="22" height="20" fill="#b4cf90" /><path d="M3 22l8-9" stroke="#4a3a28" strokeWidth="4" /><circle cx="15" cy="9" r="6" fill="#a8c0a0" stroke="#555" strokeWidth="2" /></Svg>
                Data Layer 1
              </span>
            </div>
          </div>
        </Panel>

        <Panel title="Tags: 8 / Memberships: 3" icon={<TagIcon size={17} />} buttons={[{ on: true }, { on: true }, { on: true, label: "Delete", icon: <Bin /> }]}>
          <div className="h-[78px] border border-[#7a8a99]">
            <a href="#preset" className="flex h-9 items-start gap-1 pt-[3px] pl-1 font-bold"><Road c="#f1b36a" size={17} />Highways/Streets/Secondary ...</a>
            <table className="w-full table-fixed border-separate border-spacing-0">
              <thead>
                <tr>
                  <Th cls="w-[335px]" />
                  <Th>Value</Th>
                </tr>
              </thead>
              <tbody>
                <tr className="bg-[#b8cfe5]">
                  <td className="h-4 border-b border-[#7a8a99] p-0" />
                  <td className="border-b border-[#7a8a99] p-0 pl-3 italic">&lt;different&gt;</td>
                </tr>
              </tbody>
            </table>
          </div>
        </Panel>

        <Panel buttons={[{ on: true }, { on: true, icon: <span className="ml-auto flex w-5 justify-center"><svg width="9" height="5" viewBox="0 0 10 5"><path d="M0 0h10L5 5z" fill="#111" /></svg></span> }, { label: "History", icon: <Svg size={18}><path d="M4 3h16l3 18H1z" fill="#ccc" /></Svg> }]}>
          <div className="h-[78px] border border-[#7a8a99] bg-white" />
        </Panel>

        <Panel buttons={[{}, {}, {}, { icon: <Bin c="#c9c9c9" line="#b8b8b8" /> }, { icon: <Svg size={20}><rect x="2" y="2" width="20" height="18" stroke="#bbb" strokeWidth="1.500" strokeDasharray="2 2" /><path d="M11 9v12l3-3 3 5 2-1-3-5h5z" fill="#c4c4c4" stroke="#aaa" /></Svg> }]}>
          <div className="h-[18px] border border-[#7a8a99] bg-white" />
          <div className="mt-px flex h-[59px] flex-col justify-end border border-[#7a8a99] bg-white">
            <div className="h-[15px] bg-[#eee]">
              <div className={`h-full w-[89%] border border-[#6382bf] ${SHINE}`} />
            </div>
          </div>
        </Panel>

        <Panel buttons={[{}, { label: "Show info", icon: <Svg size={18}><circle cx="12" cy="12" r="11" fill="#c0c0c0" /><path d="M6 6l5 2-3 6zM14 12l5 1-3 6z" fill="#d4d4d4" /></Svg> }]}>
          <div className="h-[78px] border border-[#7a8a99]">
            <table className="w-full table-fixed border-separate border-spacing-0">
              <thead>
                <tr>
                  <Th />
                  <Th />
                  <Th>%</Th>
                </tr>
              </thead>
              <tbody>
                <tr className="bg-white leading-4">
                  <td className="border-r border-b border-[#7a8a99] p-0" />
                  <td className="border-r border-b border-[#7a8a99] p-0" />
                  <td className="border-b border-[#7a8a99] p-0">100%</td>
                </tr>
              </tbody>
            </table>
          </div>
        </Panel>

        <Collapsed />
        <Panel buttons={[{}, {}, { label: "Fix", icon: <Wrench /> }, { label: "Ignore", icon: <Wrench /> }]}>
          <div className="h-[78px] border border-[#7a8a99] bg-white" />
        </Panel>

        <Collapsed title="Filter Hidden:0 Disabled:0" />
        <Panel
          title="Map Paint Styles"
          icon={<PaletteIcon size={16} />}
          tight
          buttons={[
            { icon: <Svg size={20}><path d="M3 11l4-3 4 6 7-10 4 3-11 15z" fill="#bdbdbd" /></Svg> },
            { icon: <ArrowIcon dir="up" /> },
            { icon: <ArrowIcon dir="down" /> },
            { on: true, icon: <Svg size={20}><rect x="2" y="2" width="15" height="18" fill="#f4f4f0" stroke="#999" /><rect x="5" y="5" width="3" height="8" fill="#fff" stroke="#555" /><circle cx="16" cy="14" r="6" fill="#b4b4d8" stroke="#888" /><circle cx="14" cy="12" r="1.500" fill="#c44" /><circle cx="18" cy="15" r="1.500" fill="#4a4" /></Svg> },
          ]}
        >
          <ul className="h-[76px] overflow-hidden border border-[#7a8a99]">
            {styles.map(([name, on, icon]) => (
              <li key={name} className="flex h-4 items-center pl-px">
                <Check label={name} checked={on}>
                  <span className="flex items-center leading-4"><span className="mr-px ml-0.5 flex w-4 justify-center">{icon}</span>{name}</span>
                </Check>
              </li>
            ))}
          </ul>
        </Panel>
        <Collapsed title="Conflation" icon={<ConflateIcon size={17} />} />
        <Collapsed title="GeoChat (1 user)" icon={<span className="rounded-[2px] border border-[#444] bg-[#dde] px-px text-[9px] leading-3 text-[#226]">Hi!</span>} />
      </div>
    </aside>
  );
}

/* ---------- page ---------- */

const menus: [string, string, string][] = [
  ["", "F", "ile"], ["", "E", "dit"], ["", "V", "iew"], ["", "T", "ools"], ["", "M", "ore tools"], ["", "D", "ata"],
  ["Selectio", "n", ""], ["", "P", "resets"], ["", "I", "magery"], ["", "W", "indows"], ["A", "u", "dio"], ["", "H", "elp"],
];

export default function App() {
  return (
    <div className="relative flex h-screen flex-col overflow-hidden bg-[#eee] font-['DejaVu_Sans',sans-serif] text-[12px] leading-4 text-[#333]">
      <nav className="flex h-[15px] shrink-0 items-center gap-[15px] overflow-hidden border-b border-[#ccc] bg-linear-to-b from-[#f4f4f4] to-[#e2e2e2] pb-1 pl-1.5 font-bold">
        {menus.map(([a, b, c]) => (
          <button key={a + b + c} type="button" className="whitespace-nowrap">{a}<span className="underline underline-offset-2">{b}</span>{c}</button>
        ))}
      </nav>
      <div className="flex h-[42px] shrink-0 gap-[11px] border-b border-[#7a8a99] bg-linear-to-b from-[#f2f2f2] to-[#dadada] pt-0.5 pl-0.5">
        {toolGroups.map((group, i) => (
          <div key={i} className="flex gap-px">
            {group.map((t) => (
              <button
                key={t.name}
                type="button"
                aria-label={t.name}
                disabled={t.off}
                className={`flex h-[35px] w-[35px] items-center justify-center border bg-[#eee] shadow-[inset_1px_1px_0_white,1px_1px_0_white] ${t.off ? "border-[#ccc]" : "border-[#999]"}`}
              >
                {t.icon}
              </button>
            ))}
          </div>
        ))}
      </div>

      <div className="flex min-h-0 flex-1">
        <div className="flex w-[39px] shrink-0 flex-col gap-px overflow-hidden border-r border-[#7a8a99] pr-0.5 pl-px">
          <button type="button" aria-label="Scroll up" className={`flex h-2 shrink-0 items-center justify-center ${SHINE}`}>
            <svg width="9" height="5" viewBox="0 0 10 5"><path d="M0 5h10L5 0z" fill="#000" /></svg>
          </button>
          {modes.map((t, i) => (
            <button key={t.name} type="button" aria-label={t.name} className={`flex h-[35px] w-[35px] shrink-0 items-center justify-center border shadow-[inset_1px_1px_0_white] ${i === 0 ? "border-[#7a8a99] bg-[#b8cfe5]" : "border-[#999]"}`}>
              {t.icon}
            </button>
          ))}
          <button type="button" className="h-8 shrink-0 pb-4">&gt;&gt;</button>
          {panels.map((t) => (
            <button key={t.name} type="button" aria-label={t.name} className={`flex h-[35px] w-[35px] shrink-0 items-center justify-center border shadow-[inset_1px_1px_0_white] ${t.on ? "border-[#7a8a99] bg-[#b8cfe5]" : "border-[#999]"}`}>
              {t.icon}
            </button>
          ))}
        </div>

        <main className="relative min-w-0 flex-1 overflow-hidden bg-black">
          <MapCanvas />
          <input
            type="range"
            aria-label="Zoom"
            min={0}
            max={100}
            defaultValue={84}
            className="absolute top-[7px] left-[10px] h-4 w-[100px] appearance-none bg-transparent [&::-webkit-slider-runnable-track]:h-[6px] [&::-webkit-slider-runnable-track]:border [&::-webkit-slider-runnable-track]:border-[#7a8a99] [&::-webkit-slider-runnable-track]:bg-linear-to-r [&::-webkit-slider-runnable-track]:from-[#c4d8ec] [&::-webkit-slider-runnable-track]:from-80% [&::-webkit-slider-runnable-track]:to-transparent [&::-webkit-slider-runnable-track]:to-80% [&::-webkit-slider-thumb]:-mt-[6px] [&::-webkit-slider-thumb]:h-4 [&::-webkit-slider-thumb]:w-[15px] [&::-webkit-slider-thumb]:appearance-none [&::-webkit-slider-thumb]:bg-linear-to-b [&::-webkit-slider-thumb]:from-white [&::-webkit-slider-thumb]:to-[#c4d4e4] [&::-webkit-slider-thumb]:[clip-path:polygon(0_0,100%_0,100%_55%,50%_100%,0_55%)]"
          />
        </main>

        <SidePanels />
      </div>

      <ConflictDialog />
    </div>
  );
}
